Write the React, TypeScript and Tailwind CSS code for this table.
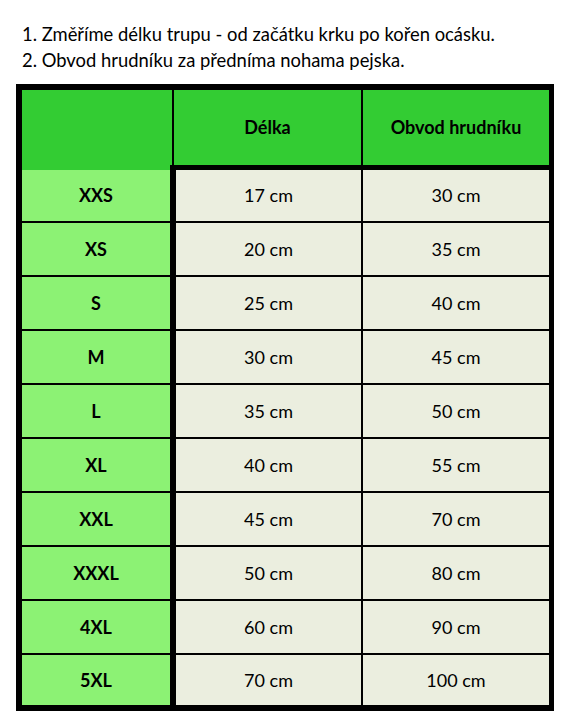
const rows = [
  { size: "XXS", length: "17 cm", chest: "30 cm" },
  { size: "XS", length: "20 cm", chest: "35 cm" },
  { size: "S", length: "25 cm", chest: "40 cm" },
  { size: "M", length: "30 cm", chest: "45 cm" },
  { size: "L", length: "35 cm", chest: "50 cm" },
  { size: "XL", length: "40 cm", chest: "55 cm" },
  { size: "XXL", length: "45 cm", chest: "70 cm" },
  { size: "XXXL", length: "50 cm", chest: "80 cm" },
  { size: "4XL", length: "60 cm", chest: "90 cm" },
  { size: "5XL", length: "70 cm", chest: "100 cm" },
];

// first and last rows are a touch shorter than the rest
const rowHeights = ["h-[51px]", "h-[52px]", "h-[52px]", "h-[52px]", "h-[52px]", "h-[52px]", "h-[52px]", "h-[52px]", "h-[52px]", "h-[50px]"];

export default function App() {
  return (
    <div className="min-h-screen bg-white text-black font-['Lato',sans-serif]">
      <div className="pt-[21px] pl-[22px] text-[18.4px] leading-[26px]">
        <p>1. Změříme délku trupu - od začátku krku po kořen ocásku.</p>
        <p>2. Obvod hrudníku za předníma nohama pejska.</p>
      </div>

      <div className="ml-[16px] mt-[11px] w-[538px] border-black border-t-[6px] border-l-[6px] border-r-[5px] border-b-[6px]">
        {/* Header */}
        <div className="flex h-[75px] bg-[#33cc33] font-bold text-[18px]">
          <div className="w-[150px]" />
          <div className="w-[2px] bg-black" />
          <div className="w-[187px] flex items-center justify-center">Délka</div>
          <div className="w-[2px] bg-black" />
          <div className="flex-1 flex items-center justify-center">Obvod hrudníku</div>
        </div>
        <div className="flex h-[5px]">
          <div className="w-[148px] bg-[#33cc33]" />
          <div className="flex-1 bg-black" />
        </div>

        {/* Rows */}
        {rows.map((r, i) => (
          <div key={r.size}>
            {i > 0 && <div className="h-[2px] bg-black" />}
            <div className={`flex ${rowHeights[i]} text-[18px]`}>
              <div className="w-[148px] bg-[#8cf274] flex items-center justify-center font-bold">{r.size}</div>
              <div className="w-[6px] bg-black" />
              <div className="w-[185px] bg-[#ebeedf] flex items-center justify-center">{r.length}</div>
              <div className="w-[2px] bg-black" />
              <div className="flex-1 bg-[#ebeedf] flex items-center justify-center">{r.chest}</div>
            </div>
          </div>
        ))}
      </div>
    </div>
  );
}
